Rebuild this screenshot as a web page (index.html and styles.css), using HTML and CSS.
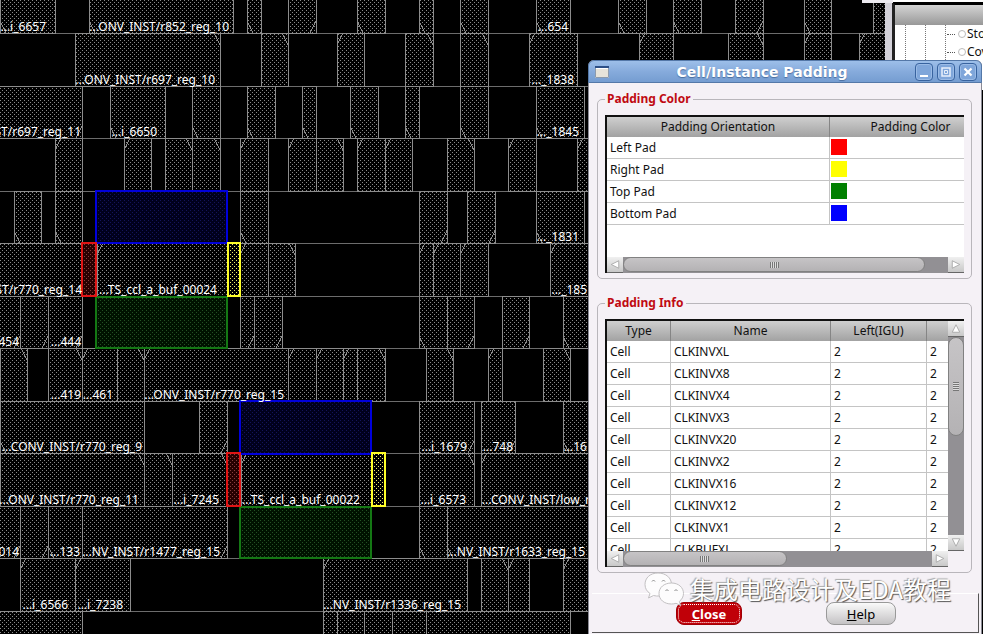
FILE: index.html
```html
<!DOCTYPE html>
<html lang="en">
<head>
  <meta charset="UTF-8">
  <meta name="viewport" content="width=device-width, initial-scale=1.0">
  <title>Cell/Instance Padding</title>
  <link rel="stylesheet" href="styles.css">
</head>
<body>

  <main class="desktop">
    <svg id="layout" class="layout" role="img" aria-label="Placement layout">
      <defs>
        <pattern id="hatch" width="4" height="4" patternUnits="userSpaceOnUse">
          <path class="dot" d="M0 0h1v1h-1zM2 2h1v1h-1z"/>
        </pattern>
        <pattern id="hatch-top" width="4" height="4" patternUnits="userSpaceOnUse">
          <path class="dot-top" d="M0 0h1v1h-1zM2 2h1v1h-1z"/>
        </pattern>
        <pattern id="hatch-left" width="4" height="4" patternUnits="userSpaceOnUse">
          <path class="dot-left" d="M0 0h1v1h-1zM2 2h1v1h-1z"/>
        </pattern>
        <pattern id="hatch-right" width="4" height="4" patternUnits="userSpaceOnUse">
          <path class="dot-right" d="M0 0h1v1h-1zM2 2h1v1h-1z"/>
        </pattern>
        <pattern id="hatch-bottom" width="4" height="4" patternUnits="userSpaceOnUse">
          <path class="dot-bottom" d="M0 0h1v1h-1zM2 2h1v1h-1z"/>
        </pattern>
      </defs>
    </svg>

    <aside class="browser">
      <div class="browser-head"></div>
      <ul class="tree">
        <li><span class="node"></span>Sto</li>
        <li><span class="node"></span>Cov</li>
      </ul>
    </aside>
    <div class="browser-tab"></div>

    <section class="dialog">
      <header class="titlebar">
        <svg class="app-icon" viewBox="0 0 14 12">
          <path fill="#fff" d="M0 0h14v12H0z"/>
          <path fill="#e6e3da" d="M1 3h12v8H1z"/>
          <path fill="none" stroke="#8c9aac" d="M.5.5h13v11H.5z"/>
          <path fill="#2c4f86" d="M0 0h14v2H0z"/>
        </svg>
        <h1>Cell/Instance Padding</h1>
        <div class="window-buttons">
          <button type="button" aria-label="Minimize">
            <svg viewBox="0 0 16 16"><path d="M4 11h8v2H4z" fill="#fff"/></svg>
          </button>
          <button type="button" aria-label="Maximize">
            <svg viewBox="0 0 16 16"><path d="M4 4h8v8H4z" fill="none" stroke="#e8f0fb" stroke-width="1.500"/><path d="M6.500 6.500h3v3h-3z" fill="none" stroke="#e8f0fb"/></svg>
          </button>
          <button type="button" aria-label="Close window">
            <svg viewBox="0 0 16 16"><path d="M4.500 4.500l7 7M11.500 4.500l-7 7" stroke="#fff" stroke-width="2.200"/></svg>
          </button>
        </div>
      </header>

      <div class="content">
        <fieldset>
          <legend>Padding Color</legend>
          <div class="list color-list">
            <div class="view">
              <table class="color-table">
                <thead>
                  <tr><th>Padding Orientation</th><th>Padding Color</th></tr>
                </thead>
                <tbody>
                  <tr><td>Left Pad</td><td><span class="swatch left"></span></td></tr>
                  <tr><td>Right Pad</td><td><span class="swatch right"></span></td></tr>
                  <tr><td>Top Pad</td><td><span class="swatch top"></span></td></tr>
                  <tr><td>Bottom Pad</td><td><span class="swatch bottom"></span></td></tr>
                </tbody>
              </table>
            </div>
            <div class="scroll-x">
              <button type="button" class="arrow" aria-label="Scroll left"><svg viewBox="0 0 16 16"><path d="M12 4v8L4 8z"/></svg></button>
              <div class="track"><div class="thumb"></div></div>
              <button type="button" class="arrow" aria-label="Scroll right"><svg viewBox="0 0 16 16"><path d="M4 4v8l8-4z"/></svg></button>
            </div>
          </div>
        </fieldset>

        <fieldset>
          <legend>Padding Info</legend>
          <div class="list info-list">
            <div class="view">
              <table class="info-table">
                <thead>
                  <tr><th>Type</th><th>Name</th><th>Left(IGU)</th><th></th></tr>
                </thead>
                <tbody>
                  <tr><td>Cell</td><td>CLKINVXL</td><td>2</td><td>2</td></tr>
                  <tr><td>Cell</td><td>CLKINVX8</td><td>2</td><td>2</td></tr>
                  <tr><td>Cell</td><td>CLKINVX4</td><td>2</td><td>2</td></tr>
                  <tr><td>Cell</td><td>CLKINVX3</td><td>2</td><td>2</td></tr>
                  <tr><td>Cell</td><td>CLKINVX20</td><td>2</td><td>2</td></tr>
                  <tr><td>Cell</td><td>CLKINVX2</td><td>2</td><td>2</td></tr>
                  <tr><td>Cell</td><td>CLKINVX16</td><td>2</td><td>2</td></tr>
                  <tr><td>Cell</td><td>CLKINVX12</td><td>2</td><td>2</td></tr>
                  <tr><td>Cell</td><td>CLKINVX1</td><td>2</td><td>2</td></tr>
                  <tr><td>Cell</td><td>CLKBUFXL</td><td>2</td><td>2</td></tr>
                </tbody>
              </table>
            </div>
            <div class="scroll-y">
              <button type="button" class="arrow" aria-label="Scroll up"><svg viewBox="0 0 16 16"><path d="M4 12h8L8 4z"/></svg></button>
              <div class="track"><div class="thumb"></div></div>
              <button type="button" class="arrow" aria-label="Scroll down"><svg viewBox="0 0 16 16"><path d="M4 4h8l-4 8z"/></svg></button>
            </div>
            <div class="scroll-x">
              <button type="button" class="arrow" aria-label="Scroll left"><svg viewBox="0 0 16 16"><path d="M12 4v8L4 8z"/></svg></button>
              <div class="track"><div class="thumb"></div></div>
              <button type="button" class="arrow" aria-label="Scroll right"><svg viewBox="0 0 16 16"><path d="M4 4v8l8-4z"/></svg></button>
            </div>
          </div>
        </fieldset>
      </div>

      <footer class="actions">
        <button type="button" class="btn primary"><u>C</u>lose</button>
        <button type="button" class="btn"><u>H</u>elp</button>
      </footer>

      <div class="watermark">
        <svg viewBox="0 0 40 34">
          <path class="bubble" d="M14 1C6 1 1 6 1 12.500c0 4 2 7 5 9L4.500 26l5-2.500c2 .5 4 .7 6 .5 7-.5 12-5 12-11.500S22 1 14 1z"/>
          <path class="bubble" d="M27.500 11C20 11 15 15.500 15 21.500S20 32 27.500 32c1.500 0 3-.2 4.500-.7l4.500 2-1.200-3.800c2.500-2 4.200-4.800 4.200-8C39.500 15.500 34.500 11 27.500 11z"/>
          <path class="eye" d="M8 9.500q1.500-3 3 0M18 9.500q1.500-3 3 0M21.500 19q1.500-3 3 0M30.500 19q1.500-3 3 0"/>
        </svg>
        <span>集成电路设计及EDA教程</span>
      </div>
    </section>
  </main>

  <script src="layout.js"></script>
</body>
</html>
```
FILE: styles.css
```css
* {
  box-sizing: border-box;
}

body {
  margin: 0;
  background: #000;
  color: #111;
  font-family: "Noto Sans", "Noto Sans CJK SC", sans-serif;
  font-size: 12px;
  line-height: 18px;
}

button {
  padding: 0;
  font: inherit;
}

.desktop {
  position: relative;
  min-height: 100vh;
  overflow: hidden;
}

/* placement view */
.layout {
  position: absolute;
  top: 0;
  left: 0;
  width: 100%;
  height: 100%;
  shape-rendering: crispEdges;
}

.layout text {
  fill: #fff;
  font-size: 12px;
  text-anchor: end;
}

.row-line {
  stroke: #6c6c6c;
}

.cell {
  fill: url(#hatch);
  stroke: #8c8c8c;
}

.corner {
  stroke: #8c8c8c;
}

.dot {
  fill: #8a8a8a;
}

.dot-top {
  fill: #14145a;
}

.dot-left {
  fill: #8a4040;
}

.dot-right {
  fill: #f0f070;
}

.dot-bottom {
  fill: #245024;
}

.pad-back {
  stroke: none;
}

.pad-back.top {
  fill: #00001c;
}

.pad-back.left {
  fill: #280000;
}

.pad-back.right {
  fill: #000;
}

.pad-back.bottom {
  fill: #001200;
}

.pad {
  stroke-width: 2;
}

.pad.top {
  fill: url(#hatch-top);
  stroke: #0000dc;
}

.pad.left {
  fill: url(#hatch-left);
  stroke: #e01414;
}

.pad.right {
  fill: url(#hatch-right);
  stroke: #ffff28;
}

.pad.bottom {
  fill: url(#hatch-bottom);
  stroke: #147814;
}

/* window behind the dialog */
.browser {
  position: absolute;
  top: 0;
  right: 0;
  width: 98px;
  height: 90px;
  padding-top: 2px;
  overflow: hidden;
  background: #fff;
  border-left: 7px solid #d4d2da;
}

.browser-tab {
  position: absolute;
  top: 0;
  right: 90px;
  width: 31px;
  height: 3px;
  background: #eceaf0;
}

.browser-head {
  height: 23px;
  background: linear-gradient(#d4d4d4, #989898);
  border-top: 3px solid #000;
  border-left: 3px solid #222;
}

.tree {
  height: 65px;
  margin: 0;
  padding: 0;
  list-style: none;
  border-left: 3px solid #222;
  background-image: linear-gradient(#777 50%, transparent 50%), linear-gradient(#777 50%, transparent 50%), linear-gradient(#777 50%, transparent 50%);
  background-size: 1px 2px;
  background-position: 10px 0, 30px 0, 50px 0;
  background-repeat: repeat-y;
}

.tree li {
  display: flex;
  align-items: center;
  height: 18px;
  padding-left: 52px;
}

.tree li::before {
  content: "";
  flex: none;
  width: 8px;
  border-top: 1px dotted #555;
}

.node {
  flex: none;
  width: 8px;
  height: 8px;
  margin: 0 1px 0 3px;
  border: 1px solid #bbb;
  border-radius: 50%;
}

/* dialog */
.dialog {
  position: absolute;
  top: 60px;
  right: 1px;
  width: 394px;
  background: #f5f1f6;
  border: 1px solid #8b8b95;
  border-top: 0;
  border-radius: 6px 6px 0 0;
}

.titlebar {
  display: flex;
  align-items: center;
  height: 23px;
  margin: 0 -1px;
  padding: 0 4px 0 6px;
  background: linear-gradient(#9dbfe9, #86abdc 50%, #759dd1);
  border: 1px solid #5478a8;
  border-radius: 6px 6px 0 0;
}

.app-icon {
  width: 14px;
  height: 12px;
}

.titlebar h1 {
  flex: 1;
  margin: 0;
  color: #fff;
  font-family: "DejaVu Sans", sans-serif;
  font-size: 14px;
  line-height: 20px;
  text-align: center;
  text-shadow: 0 1px 1px #4a6d9e;
}

.window-buttons {
  display: flex;
  gap: 4px;
}

.window-buttons button {
  width: 18px;
  height: 18px;
  background: #7fa6da;
  border: 1px solid #38639f;
  border-radius: 4px;
  box-shadow: inset 0 0 0 1px #9abbe6;
}

.window-buttons svg {
  display: block;
}

.content {
  padding: 7px 9px 0 8px;
}

fieldset {
  min-width: 0;
  margin: 0 0 15px;
  padding: 7px 7px 5px;
  border: 1px solid #b9b6bb;
  border-radius: 5px;
}

legend {
  padding: 0 2px;
  color: #c00a12;
  font-weight: bold;
}

.list {
  display: grid;
  grid-template-columns: minmax(0, 1fr) auto;
  grid-template-rows: minmax(0, 1fr) 16px;
  border-top: 2px solid #111;
  border-left: 2px solid #111;
}

.color-list {
  height: 158px;
}

.info-list {
  height: 248px;
}

.view {
  overflow: hidden;
  background: #fff;
}

.color-list .view {
  grid-column: span 2;
}

table {
  table-layout: fixed;
  border-collapse: separate;
  border-spacing: 0;
}

.color-table {
  width: 385px;
}

.color-table th:first-child {
  width: 223px;
}

.info-table {
  width: 436px;
}

.info-table th:nth-child(1) {
  width: 64px;
}

.info-table th:nth-child(2) {
  width: 160px;
}

.info-table th:nth-child(3) {
  width: 96px;
}

th {
  height: 20px;
  padding: 0;
  font-weight: normal;
  background: linear-gradient(#cfcfcf, #a2a2a2);
  border-right: 1px solid #858585;
}

td {
  height: 22px;
  padding: 0 3px;
  border-right: 1px solid #c4c4c4;
  border-bottom: 1px solid #c4c4c4;
}

.color-table td:last-child {
  padding: 0 1px 2px;
}

.swatch {
  display: block;
  width: 16px;
  height: 16px;
}

.swatch.left {
  background: #f00;
}

.swatch.right {
  background: #ff0;
}

.swatch.top {
  background: #008000;
}

.swatch.bottom {
  background: #00f;
}

/* scroll bars */
.scroll-x,
.scroll-y {
  display: flex;
  background: #929094;
}

.color-list .scroll-x {
  grid-column: span 2;
}

.scroll-y {
  flex-direction: column;
  width: 16px;
}

.track {
  flex: 1;
}

.arrow {
  flex: none;
  width: 16px;
  height: 16px;
  background: linear-gradient(#f0f0f0, #c8c8c8);
  border: 0;
  border-bottom: 1px solid #666;
}

.arrow svg {
  display: block;
  width: 16px;
  height: 15px;
  fill: #fff;
  stroke: #aaa;
}

.thumb {
  display: flex;
  align-items: center;
  justify-content: center;
  height: 15px;
  background: linear-gradient(#c6c4c6, #b4b2b4);
  border: 1px solid #818181;
  border-radius: 8px;
}

.thumb::after {
  content: "";
  width: 9px;
  height: 6px;
  background: repeating-linear-gradient(90deg, #777 0 1px, #ddd 1px 2px);
}

.color-list .thumb {
  width: 93%;
}

.info-list .thumb {
  width: 53%;
}

.info-list .scroll-y .thumb {
  width: 16px;
  height: 50%;
}

.scroll-y .thumb::after {
  width: 6px;
  height: 9px;
  background: repeating-linear-gradient(#777 0 1px, #ddd 1px 2px);
}

/* bottom bar */
.actions {
  display: flex;
  align-items: flex-start;
  gap: 84px;
  height: 40px;
  margin: 20px 2px 1px 3px;
  padding: 8px 0 0 84px;
  border-top: 1px solid #fff;
  border-right: 1px solid #555;
  border-bottom: 1px solid #555;
}

.btn {
  width: 70px;
  height: 23px;
  background: linear-gradient(#fafafa, #c4c2c4);
  border: 1px solid #999;
  border-radius: 8px;
  font-size: 13px;
}

.btn.primary {
  width: 66px;
  background: #c00008;
  border-color: #a00006;
  color: #fff;
  font-weight: bold;
  outline: 1px dotted #fff;
  outline-offset: -3px;
}

.watermark {
  position: absolute;
  right: 30px;
  bottom: 28px;
  display: flex;
  align-items: center;
  gap: 6px;
  color: #fff;
  font-family: "Noto Sans CJK SC", sans-serif;
  font-size: 24px;
  line-height: 34px;
  text-shadow: 1px 1px 1px #555, -1px -1px 1px #aaa;
  white-space: nowrap;
  pointer-events: none;
}

.watermark svg {
  width: 40px;
  height: 34px;
}

.bubble {
  fill: #fdfcfd;
  stroke: #c2c0c2;
}

.eye {
  fill: none;
  stroke: #888;
}
```
FILE: layout.js
```js
const SVG = 'http://www.w3.org/2000/svg';
const layout = document.getElementById('layout');

// top edge of every placement row
const rowTops = [-19, 33, 86, 138, 191, 243, 296, 348, 401, 453, 506, 558, 611, 663];

// [left, right, orientation corner, label, label end]
const rows = [
  [[0, 55, 'bl', '...i_6657', 46], [89, 233, 'bl', '...ONV_INST/r852_reg_10', 229], [247, 261, 'bl'], [288, 316, 'br'], [357, 385, 'bl'], [419, 433, 'bl'], [460, 488, 'bl'], [536, 570, 'bl', '...654', 568], [618, 646, 'bl'], [673, 701, 'bl'], [735, 763, 'br'], [804, 831, 'bl'], [873, 890, 'br']],
  [[75, 220, 'tr', '...ONV_INST/r697_reg_10', 215], [261, 288, 'tr'], [337, 364, 'tl'], [405, 433, 'tr'], [460, 488, 'tr'], [529, 577, 'tl', '..._1838', 574], [639, 673, 'tl'], [728, 763, 'tr'], [804, 831, 'tl'], [859, 890, 'tl']],
  [[-60, 82, 'br', '...ONV_INST/r697_reg_11', 81], [110, 165, 'bl', '...i_6650', 157], [192, 220, 'bl'], [247, 275, 'bl'], [302, 316, 'bl'], [350, 378, 'bl'], [405, 419, 'bl'], [460, 488, 'bl'], [536, 584, 'bl', '..._1845', 579]],
  [[55, 82, 'tl'], [124, 151, 'tl'], [165, 192, 'tr'], [192, 220, 'tr'], [240, 268, 'tl'], [288, 316, 'tl'], [316, 343, 'tr'], [357, 385, 'tl'], [385, 412, 'tl'], [447, 474, 'tr'], [508, 536, 'tl'], [577, 604, 'tl']],
  [[14, 41, 'bl'], [55, 82, 'bl'], [240, 268, 'bl'], [419, 447, 'br'], [467, 495, 'br'], [536, 584, 'bl', '..._1831', 579]],
  [[-60, 82, 'tl', '...ONV_INST/r770_reg_14', 82], [97, 227, 'tl', '...TS_ccl_a_buf_00024', 217], [240, 268, 'tl'], [268, 295, 'tr'], [419, 433, 'tl'], [433, 460, 'tl'], [460, 488, 'tl'], [550, 600, 'tl', '..._185', 587]],
  [[-20, 20, 'br', '...454', 19], [20, 48, 'br'], [48, 82, 'br', '...444', 81], [240, 254, 'br'], [254, 282, 'br'], [419, 447, 'bl'], [447, 474, 'br'], [502, 529, 'br'], [563, 600, 'bl']],
  [[0, 27, 'tr'], [48, 82, 'tr', '...419', 81], [82, 117, 'tl', '...461', 113], [117, 144, 'tr'], [144, 288, 'tl', '...ONV_INST/r770_reg_15', 284], [288, 316, 'tl'], [316, 343, 'tl'], [343, 357, 'tl'], [357, 385, 'tr'], [426, 453, 'tr'], [488, 502, 'tl'], [543, 570, 'tr']],
  [[0, 144, 'bl', '...CONV_INST/r770_reg_9', 142], [199, 227, 'br'], [419, 474, 'br', '...i_1679', 467], [481, 515, 'br', '...748', 513], [563, 600, 'bl', '...16', 587]],
  [[0, 144, 'tr', '0...ONV_INST/r770_reg_11', 139], [144, 172, 'tr'], [172, 227, 'tr', '...i_7245', 219], [241, 371, 'tl', '...TS_ccl_a_buf_00022', 360], [419, 474, 'tr', '...i_6573', 466], [481, 624, 'tl', '...CONV_INST/low_r', 590]],
  [[-20, 20, 'br', '...014', 19], [20, 48, 'br'], [48, 82, 'bl', '...133', 80], [82, 227, 'br', '...NV_INST/r1477_reg_15', 220], [419, 447, 'bl'], [447, 600, 'bl', '...NV_INST/r1633_reg_15', 585]],
  [[20, 75, 'tl', '...i_6566', 68], [75, 130, 'tl', '...i_7238', 123], [323, 467, 'tl', '...NV_INST/r1336_reg_15', 461], [481, 508, 'tr'], [508, 529, 'tl'], [563, 600, 'tl']],
  [[-20, 82, 'bl'], [323, 337, 'bl'], [337, 364, 'bl'], [364, 392, 'bl'], [392, 426, 'bl'], [426, 570, 'bl']]
];

// [side, left, top, width, height]
const pads = [
  ['bottom', 96, 297, 131, 51],
  ['top', 96, 191, 131, 52],
  ['left', 82, 243, 14, 53],
  ['right', 228, 243, 12, 53],
  ['bottom', 240, 507, 131, 51],
  ['top', 240, 401, 131, 53],
  ['left', 227, 453, 13, 53],
  ['right', 372, 453, 13, 53]
];

function add(tag, className, attrs) {
  const el = document.createElementNS(SVG, tag);
  el.setAttribute('class', className);
  for (const key in attrs) el.setAttribute(key, attrs[key]);
  layout.appendChild(el);
  return el;
}

rowTops.forEach(function(y) {
  add('line', 'row-line', { x1: 0, x2: 890, y1: y + 0.5, y2: y + 0.5 });
});

rows.forEach(function(cells, i) {
  const top = rowTops[i];
  const bottom = rowTops[i + 1];
  cells.forEach(function([left, right, corner]) {
    add('rect', 'cell', { x: left + 0.5, y: top + 0.5, width: right - left, height: bottom - top });
    const x = corner[1] === 'l' ? left : right;
    const dx = corner[1] === 'l' ? 6 : -6;
    const y = corner[0] === 't' ? top : bottom;
    const dy = corner[0] === 't' ? 12 : -12;
    add('line', 'corner', { x1: x, y1: y + dy, x2: x + dx, y2: y });
  });
});

pads.forEach(function([side, x, y, width, height]) {
  add('rect', 'pad-back ' + side, { x, y, width, height });
  add('rect', 'pad ' + side, { x, y, width, height });
});

rows.forEach(function(cells, i) {
  cells.forEach(function([left, right, corner, label, end]) {
    if (label) add('text', 'label', { x: end, y: rowTops[i + 1] - 2 }).textContent = label;
  });
});
```
